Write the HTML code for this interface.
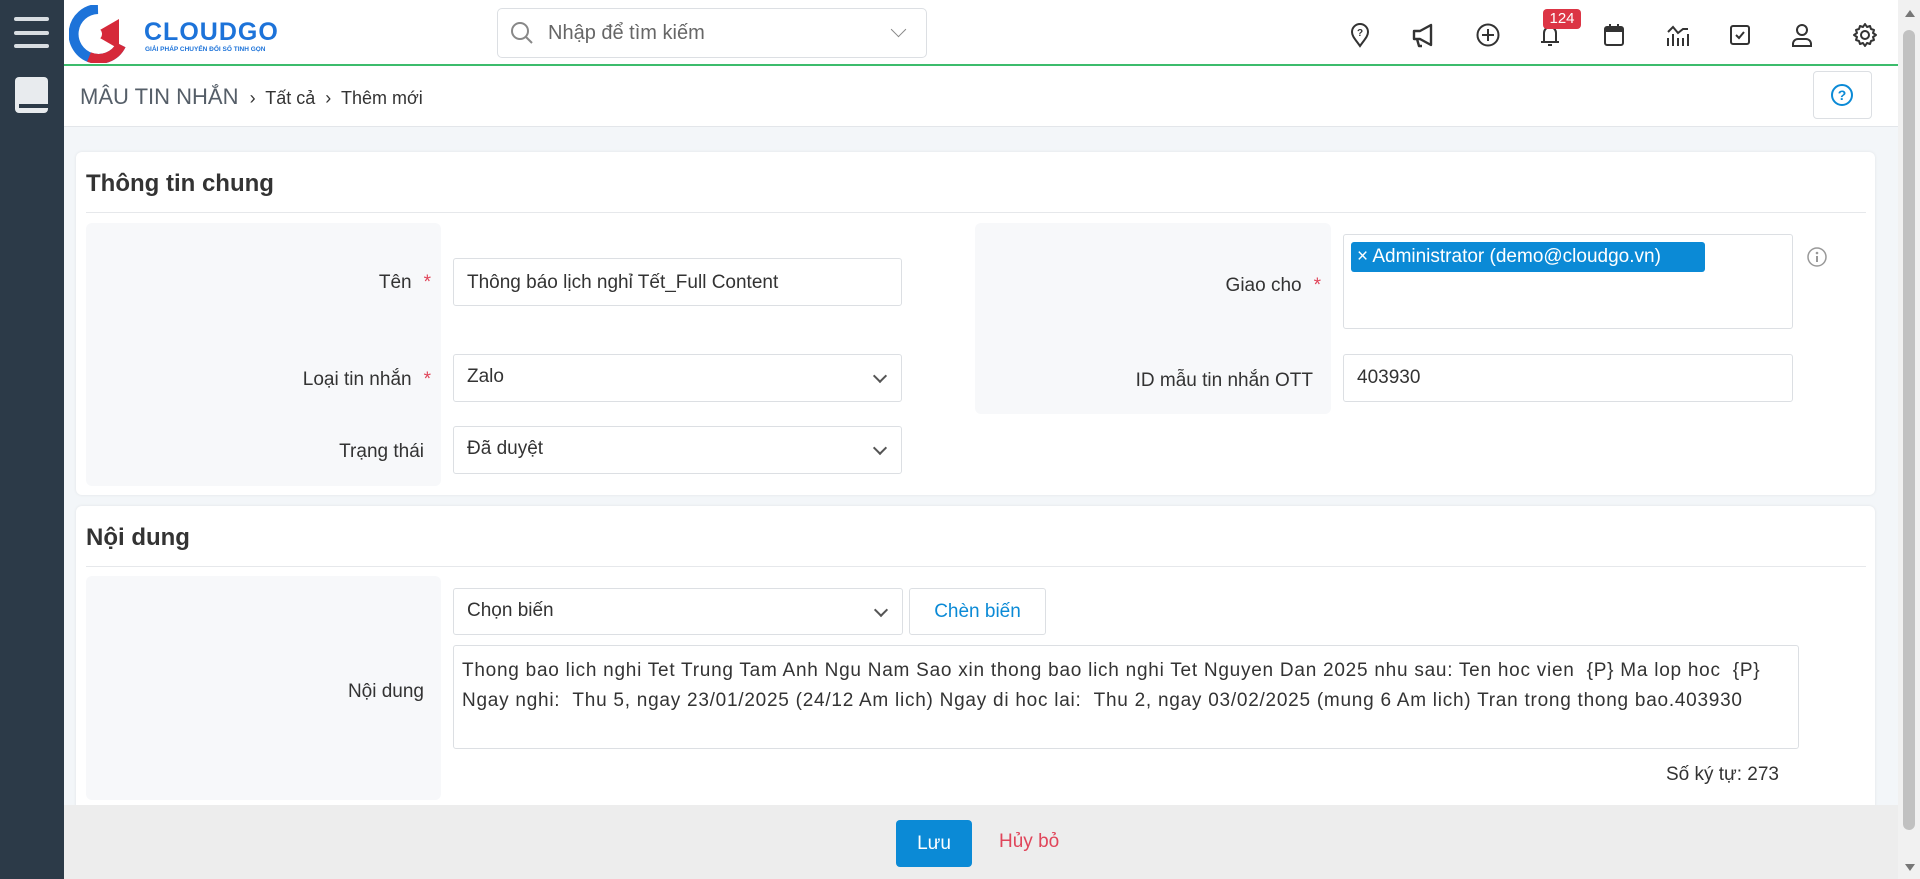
<!DOCTYPE html>
<html><head><meta charset="utf-8"><style>
*{box-sizing:border-box;margin:0;padding:0}
body{width:1920px;height:879px;overflow:hidden;font-family:"Liberation Sans","Noto Sans CJK SC",sans-serif;color:#333;background:#f3f6f9;position:relative;font-size:19px}
.abs{position:absolute}
.side{left:0;top:0;width:64px;height:879px;background:#2c3a48}
.hdr{left:64px;top:0;width:1834px;height:66px;background:#fff;border-bottom:2px solid #3cbc6c}
.bc{left:64px;top:66px;width:1834px;height:61px;background:#fff;border-bottom:1px solid #e3e6ea}
.card{background:#fff;border-radius:6px;box-shadow:0 0 3px rgba(0,0,0,.08)}
.panel{background:#f7f8fa;border-radius:6px}
.inp{background:#fff;border:1px solid #dcdfe3;border-radius:3px;padding:0 13px;display:flex;align-items:center;font-size:19px;color:#333}
.lbl{text-align:right;font-size:19px;color:#333}
.req{color:#e0455a;margin-left:12px}
.chev{position:absolute;right:16px;top:50%;width:10px;height:10px;border-right:2px solid #555;border-bottom:2px solid #555;transform:translateY(-70%) rotate(45deg)}
.ico{position:absolute;top:22px;width:26px;height:26px}
</style></head><body>
<div class="abs side">
  <div class="abs" style="left:14px;top:17px;width:35px;height:4px;background:#d8dde2;border-radius:2px"></div>
  <div class="abs" style="left:14px;top:31px;width:35px;height:4px;background:#d8dde2;border-radius:2px"></div>
  <div class="abs" style="left:14px;top:44px;width:35px;height:4px;background:#d8dde2;border-radius:2px"></div>
  <div class="abs" style="left:15px;top:77px;width:33px;height:36px;background:#e8ebee;border-radius:4px"></div>
  <div class="abs" style="left:19px;top:104px;width:29px;height:4px;background:#2c3a48"></div>
</div>
<div class="abs hdr">
  <svg class="abs" style="left:5px;top:5px" width="58" height="58" viewBox="0 0 58 58">
    <path d="M29 4 A25 25 0 1 0 52 40" fill="none" stroke="#1d73d9" stroke-width="10"/>
    <path d="M52 40 A25 25 0 0 1 20 52" fill="none" stroke="#d6293a" stroke-width="10"/>
    <polygon points="24,29 50,14 50,44" fill="#d6293a"/>
    <circle cx="27" cy="29" r="6" fill="#fff"/>
  </svg>
  <div class="abs" style="left:80px;top:18px;font-size:25px;font-weight:bold;color:#1d73d9;letter-spacing:1px">CLOUDGO</div>
  <div class="abs" style="left:81px;top:46px;font-size:6.5px;font-weight:bold;color:#1d73d9">GIẢI PHÁP CHUYỂN ĐỔI SỐ TINH GỌN</div>
  <div class="abs" style="left:433px;top:8px;width:430px;height:50px;border:1px solid #dcdfe3;border-radius:5px"></div>
  <svg class="abs" style="left:445px;top:20px" width="26" height="26" viewBox="0 0 26 26"><circle cx="11" cy="11" r="8" fill="none" stroke="#888" stroke-width="2"/><line x1="17" y1="17" x2="23" y2="23" stroke="#888" stroke-width="2"/></svg>
</div>
<div class="abs" style="left:548px;top:22px;font-size:20px;color:#666">Nhập để tìm kiếm</div>
<div class="abs" style="left:893px;top:24px;width:11px;height:11px;border-right:1.5px solid #888;border-bottom:1.5px solid #888;transform:rotate(45deg)"></div>
<!-- header icons -->
<svg class="ico" style="left:1347px" viewBox="0 0 26 26"><path d="M13 24 C8 17 5 14 5 10 A8 8 0 0 1 21 10 C21 14 18 17 13 24Z" fill="none" stroke="#333" stroke-width="2"/><text x="13" y="14" font-size="10" text-anchor="middle" font-family="Liberation Sans" font-weight="bold" fill="#333">?</text></svg>
<svg class="ico" style="left:1411px" viewBox="0 0 26 26"><path d="M3 9h6l11-6v20L9 17H3z M6 17l2 7h3" fill="none" stroke="#333" stroke-width="2.4" stroke-linejoin="round"/></svg>
<svg class="ico" style="left:1475px" viewBox="0 0 26 26"><circle cx="13" cy="13" r="10.5" fill="none" stroke="#333" stroke-width="2"/><path d="M13 7v12M7 13h12" stroke="#333" stroke-width="2"/></svg>
<svg class="ico" style="left:1537px" viewBox="0 0 26 26"><path d="M7 20V11a6 6 0 0 1 12 0v9M4 20h18M11 23h4" fill="none" stroke="#333" stroke-width="2"/></svg>
<div class="abs" style="left:1543px;top:9px;width:38px;height:20px;background:#dc3545;color:#fff;font-size:15px;border-radius:4px;text-align:center;line-height:20px">124</div>
<svg class="ico" style="left:1601px" viewBox="0 0 26 26"><rect x="4" y="5" width="18" height="18" rx="2" fill="none" stroke="#333" stroke-width="2"/><rect x="4" y="5" width="18" height="5" fill="#333"/><path d="M9 2v5M17 2v5" stroke="#333" stroke-width="2"/></svg>
<svg class="ico" style="left:1665px" viewBox="0 0 26 26"><path d="M3 24v-8M8 24v-12M13 24v-8M18 24v-8M23 24v-12M3 10l5-5 5 6 5-4 5 0" fill="none" stroke="#333" stroke-width="2"/></svg>
<svg class="ico" style="left:1727px" viewBox="0 0 26 26"><rect x="4" y="4" width="18" height="18" rx="2" fill="none" stroke="#333" stroke-width="2"/><path d="M9 13l3 3 5-6" fill="none" stroke="#333" stroke-width="2"/></svg>
<svg class="ico" style="left:1789px" viewBox="0 0 26 26"><circle cx="13" cy="8" r="5" fill="none" stroke="#333" stroke-width="2"/><path d="M4 24v-2a5 5 0 0 1 5-5h8a5 5 0 0 1 5 5v2z" fill="none" stroke="#333" stroke-width="2"/></svg>
<svg class="ico" style="left:1852px" viewBox="0 0 26 26"><circle cx="13" cy="13" r="4" fill="none" stroke="#333" stroke-width="2"/><path d="M13 2l2 3 3-1 1 3 3 1-1 3 3 2-3 2 1 3-3 1-1 3-3-1-2 3-2-3-3 1-1-3-3-1 1-3-3-2 3-2-1-3 3-1 1-3 3 1z" fill="none" stroke="#333" stroke-width="2" stroke-linejoin="round"/></svg>
<!-- breadcrumb -->
<div class="abs bc"></div>
<div class="abs" style="left:80px;top:84px;font-size:22px;color:#555e68">MÂU TIN NHẮN <span style="font-size:18px;color:#333">&nbsp;›&nbsp; Tất cả &nbsp;›&nbsp; Thêm mới</span></div>
<div class="abs" style="left:1813px;top:71px;width:59px;height:48px;border:1px solid #dcdfe3;border-radius:4px;background:#fff"></div>
<svg class="abs" style="left:1830px;top:83px" width="24" height="24" viewBox="0 0 24 24"><circle cx="12" cy="12" r="10" fill="none" stroke="#0b8ad6" stroke-width="2"/><text x="12" y="17" font-size="14" font-weight="bold" text-anchor="middle" fill="#0b8ad6" font-family="Liberation Sans">?</text></svg>
<!-- card 1 -->
<div class="abs card" style="left:76px;top:152px;width:1799px;height:343px"></div>
<div class="abs" style="left:86px;top:170px;font-size:24px;font-weight:bold;color:#333">Thông tin chung</div>
<div class="abs" style="left:86px;top:212px;width:1780px;height:1px;background:#e6e8eb"></div>
<div class="abs panel" style="left:86px;top:223px;width:355px;height:263px"></div>
<div class="abs lbl" style="left:86px;top:272px;width:345px">Tên<span class="req">*</span></div>
<div class="abs lbl" style="left:86px;top:369px;width:345px">Loại tin nhắn<span class="req">*</span></div>
<div class="abs lbl" style="left:86px;top:441px;width:338px">Trạng thái</div>
<div class="abs inp" style="left:453px;top:258px;width:449px;height:48px;padding-top:2px">Thông báo lịch nghỉ Tết_Full Content</div>
<div class="abs inp" style="left:453px;top:354px;width:449px;height:48px;padding-bottom:2px">Zalo<span class="chev"></span></div>
<div class="abs inp" style="left:453px;top:426px;width:449px;height:48px;padding-bottom:2px">Đã duyệt<span class="chev"></span></div>
<div class="abs panel" style="left:975px;top:223px;width:356px;height:191px"></div>
<div class="abs lbl" style="left:975px;top:275px;width:346px">Giao cho<span class="req">*</span></div>
<div class="abs lbl" style="left:975px;top:370px;width:338px">ID mẫu tin nhắn OTT</div>
<div class="abs inp" style="left:1343px;top:234px;width:450px;height:95px"></div>
<div class="abs" style="left:1351px;top:242px;width:354px;height:30px;background:#0b8ad6;border-radius:3px;color:#fff;font-size:19px;line-height:30px;padding-left:6px">× Administrator (demo@cloudgo.vn)</div>
<svg class="abs" style="left:1806px;top:246px" width="22" height="22" viewBox="0 0 22 22"><circle cx="11" cy="11" r="9" fill="none" stroke="#999" stroke-width="1.5"/><circle cx="11" cy="7" r="1.3" fill="#999"/><path d="M11 10v6" stroke="#999" stroke-width="2"/></svg>
<div class="abs inp" style="left:1343px;top:354px;width:450px;height:48px">403930</div>
<!-- card 2 -->
<div class="abs card" style="left:76px;top:506px;width:1799px;height:320px"></div>
<div class="abs" style="left:86px;top:524px;font-size:24px;font-weight:bold;color:#333">Nội dung</div>
<div class="abs" style="left:86px;top:566px;width:1780px;height:1px;background:#e6e8eb"></div>
<div class="abs panel" style="left:86px;top:576px;width:355px;height:224px"></div>
<div class="abs lbl" style="left:86px;top:681px;width:338px">Nội dung</div>
<div class="abs inp" style="left:453px;top:588px;width:450px;height:47px;padding-bottom:2px">Chọn biến<span class="chev"></span></div>
<div class="abs" style="left:909px;top:588px;width:137px;height:47px;border:1px solid #dcdfe3;border-radius:3px;background:#fff;color:#0b8ad6;text-align:center;line-height:45px;font-size:19px">Chèn biến</div>
<div class="abs inp" style="left:453px;top:645px;width:1346px;height:104px;align-items:flex-start;padding:10px 8px 0 8px;line-height:30px;font-size:19px;letter-spacing:.75px;white-space:nowrap;display:block">Thong bao lich nghi Tet Trung Tam Anh Ngu Nam Sao xin thong bao lich nghi Tet Nguyen Dan 2025 nhu sau: Ten hoc vien &nbsp;{P} Ma lop hoc &nbsp;{P}<br>Ngay nghi: &nbsp;Thu 5, ngay 23/01/2025 (24/12 Am lich) Ngay di hoc lai: &nbsp;Thu 2, ngay 03/02/2025 (mung 6 Am lich) Tran trong thong bao.403930</div>
<div class="abs" style="left:1600px;top:764px;width:179px;text-align:right;font-size:19px">Số ký tự: 273</div>
<!-- footer -->
<div class="abs" style="left:64px;top:805px;width:1834px;height:74px;background:#ededed"></div>
<div class="abs" style="left:896px;top:820px;width:76px;height:47px;background:#0b8ad6;border-radius:4px;color:#fff;text-align:center;line-height:47px;font-size:19px">Lưu</div>
<div class="abs" style="left:999px;top:831px;color:#e0455a;font-size:19px">Hủy bỏ</div>
<!-- scrollbar -->
<div class="abs" style="left:1898px;top:0;width:22px;height:879px;background:#f1f1f1"></div>
<div class="abs" style="left:1905px;top:10px;width:0;height:0;border-left:5px solid transparent;border-right:5px solid transparent;border-bottom:7px solid #777"></div>
<div class="abs" style="left:1903px;top:30px;width:12px;height:800px;background:#c1c1c1;border-radius:6px"></div>
<div class="abs" style="left:1905px;top:864px;width:0;height:0;border-left:5px solid transparent;border-right:5px solid transparent;border-top:7px solid #777"></div>
</body></html>
